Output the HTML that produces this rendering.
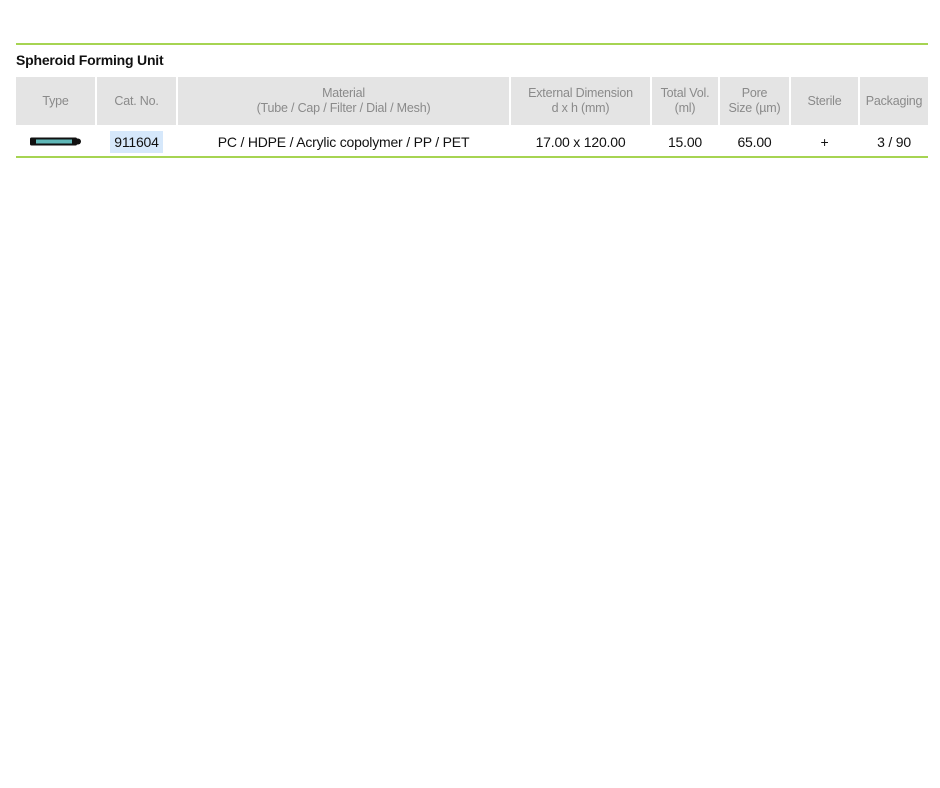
<!DOCTYPE html>
<html><head><meta charset="utf-8"><style>
body{margin:0;background:#fff;width:940px;height:788px;position:relative;font-family:"Liberation Sans",Arial,sans-serif;}
.g{position:absolute;left:16px;width:912px;height:2px;background:#a6d452;}
.t{position:absolute;left:16px;top:52px;font-size:14px;font-weight:bold;color:#111;letter-spacing:-0.2px;}
.h{position:absolute;top:77px;height:48px;background:#e4e4e4;color:#8a8a8a;font-size:12.5px;line-height:15px;display:flex;align-items:center;justify-content:center;text-align:center;letter-spacing:-0.2px;}
.d{position:absolute;top:127px;height:29px;color:#111;font-size:14px;display:flex;align-items:center;justify-content:center;letter-spacing:-0.2px;}
</style></head><body>
<div class="g" style="top:43px"></div>
<div class="t">Spheroid Forming Unit</div>
<div class="h" style="left:16px;width:79px">Type</div>
<div class="h" style="left:97px;width:79px">Cat. No.</div>
<div class="h" style="left:178px;width:331px">Material<br>(Tube / Cap / Filter / Dial / Mesh)</div>
<div class="h" style="left:511px;width:139px">External Dimension<br>d x h (mm)</div>
<div class="h" style="left:652px;width:66px">Total Vol.<br>(ml)</div>
<div class="h" style="left:720px;width:69px">Pore<br>Size (µm)</div>
<div class="h" style="left:791px;width:67px">Sterile</div>
<div class="h" style="left:860px;width:68px">Packaging</div>
<div class="d" style="left:16px;width:79px"><svg width="52" height="9" viewBox="0 0 52 9"><rect x="0" y="0.5" width="47" height="8" rx="1.5" fill="#111"/><rect x="6" y="2.5" width="36" height="4" fill="#5fb8b8"/><path d="M46 1.5 h2 a3 3 0 0 1 0 6 h-2z" fill="#111"/></svg></div>
<div class="d" style="left:97px;width:79px"><span style="background:#d6e8fb;padding:3px 4px">911604</span></div>
<div class="d" style="left:178px;width:331px">PC / HDPE / Acrylic copolymer / PP / PET</div>
<div class="d" style="left:511px;width:139px">17.00 x 120.00</div>
<div class="d" style="left:652px;width:66px">15.00</div>
<div class="d" style="left:720px;width:69px">65.00</div>
<div class="d" style="left:791px;width:67px">+</div>
<div class="d" style="left:860px;width:68px">3 / 90</div>
<div class="g" style="top:156px"></div>
</body></html>
